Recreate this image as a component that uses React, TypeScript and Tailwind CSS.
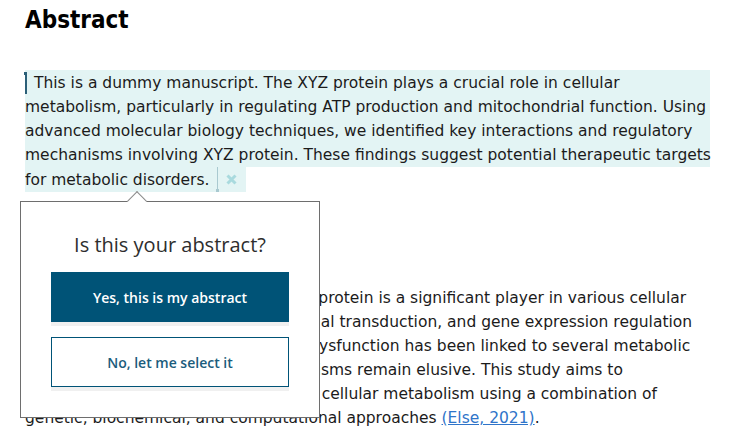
import React from "react";

const body = "font-['DejaVu_Sans',sans-serif]";
const ui = "font-['Open_Sans',sans-serif]";

const App = () => {
  return (
    <div className={`relative h-[444px] w-[740px] overflow-hidden bg-white px-[25px] text-[#1b1b1b] ${body}`}>
      <h2 className="pt-[5px] font-['DejaVu_Sans_Condensed','DejaVu_Sans',sans-serif] text-[24px] font-bold leading-[30px] text-black">
        Abstract
      </h2>

      {/* selected abstract */}
      <div className="mt-[35px] whitespace-nowrap text-[15.5px] leading-[24px]">
        <div className="w-[685px] bg-[#e3f4f4] pt-[1px]">
          <div className="flex items-center">
            <span className="relative mr-[7px] inline-block h-[22px] w-[2px] bg-[#2b5f78]">
              <span className="absolute -left-[1px] top-0 h-[3px] w-[3px] bg-[#2b5f78]" />
            </span>
            This is a dummy manuscript. The XYZ protein plays a crucial role in cellular
          </div>
          <div>metabolism, particularly in regulating ATP production and mitochondrial function. Using</div>
          <div>advanced molecular biology techniques, we identified key interactions and regulatory</div>
          <div>mechanisms involving XYZ protein. These findings suggest potential therapeutic targets</div>
        </div>
        <div className="flex h-[25px] w-fit items-center bg-[#e3f4f4] pr-[9px]">
          <span>for metabolic disorders.</span>
          <span className="relative ml-[8px] h-[25px] w-[1px] bg-[#a9c9d0]">
            <span className="absolute -left-[1px] bottom-0 h-[3px] w-[3px] bg-[#a9c9d0]" />
          </span>
          <svg className="ml-[8px]" width="11" height="11" viewBox="0 0 11 11" aria-hidden="true">
            <path d="M1.5 1.5 L9.5 9.5 M9.5 1.5 L1.5 9.5" stroke="#a9dade" strokeWidth="3" />
          </svg>
        </div>
      </div>

      <h3 className="mt-[40px] text-[20px] font-bold leading-[28px] text-black">Introduction</h3>

      <div className="mt-[26px] whitespace-nowrap text-[15.5px] leading-[24px]">
        <div>Recent trials had shown that the XYZ protein is a significant player in various cellular</div>
        <div>processes, including metabolism, signal transduction, and gene expression regulation</div>
        <div>(Smith et al., 2019). Importantly, its dysfunction has been linked to several metabolic</div>
        <div>disorders, yet the underlying mechanisms remain elusive. This study aims to</div>
        <div>
          investigate XYZ in <a href="#" className="text-[#2f74c9] underline">mitochondrial and</a>&nbsp; cellular metabolism using a combination of
        </div>
        <div>
          genetic, biochemical, and computational approaches{" "}
          <a href="#" className="text-[#2f74c9] underline">(Else, 2021)</a>.
        </div>
      </div>

      {/* confirmation popover */}
      <div className={`absolute left-[20px] top-[201px] h-[217px] w-[300px] border border-[#6e6e6e] bg-white ${ui}`}>
        <span className="absolute left-[109px] top-[-8px] h-[14px] w-[14px] rotate-45 border-l border-t border-[#8a8a8a] bg-white" />
        <p className="mt-[29px] text-center text-[20px] leading-[28px] text-[#2e2e2e]">Is this your abstract?</p>
        <div className="mt-[13px] flex flex-col gap-[15px] px-[30px]">
          <button className="h-[50px] w-full bg-[#005377] text-[14px] font-semibold text-white shadow-[0_4px_0_#f0f0f0]">
            Yes, this is my abstract
          </button>
          <button className="h-[50px] w-full border border-[#005377] bg-white text-[14px] font-semibold text-[#1b5c7c] shadow-[0_4px_0_#f0f0f0]">
            No, let me select it
          </button>
        </div>
      </div>
    </div>
  );
};

export default App;
